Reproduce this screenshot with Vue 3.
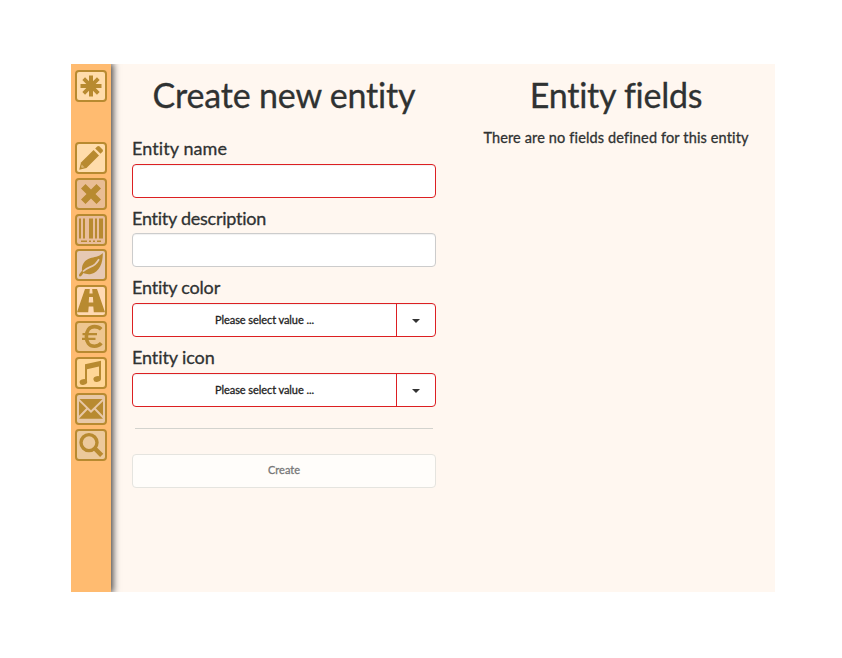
<script setup>
const tools = [
  { name: 'new', bg: '#ffdcab', first: true },
  { name: 'pencil', bg: '#ffdcab' },
  { name: 'remove', bg: '#e9bd94' },
  { name: 'barcode', bg: '#e9bd9a' },
  { name: 'leaf', bg: '#e6c9b4' },
  { name: 'road', bg: '#ffd9b3' },
  { name: 'euro', bg: '#eec690' },
  { name: 'music', bg: '#ffd697' },
  { name: 'mail', bg: '#e8c8a6' },
  { name: 'search', bg: '#ecc99b' },
]
</script>

<template>
  <div class="app">
    <nav class="sidebar">
      <button
        v-for="t in tools"
        :key="t.name"
        class="tool"
        :class="{ first: t.first }"
        :style="{ backgroundColor: t.bg }"
        :aria-label="t.name"
      >
        <svg viewBox="0 0 32 32" fill="#b88a30" stroke="none">
          <g v-if="t.name === 'new'" stroke="#b88a30" stroke-width="4">
            <path d="M16 5.5V26.5M5.5 16H26.5" />
            <path d="M8.7 8.7L23.3 23.3M23.3 8.7L8.7 23.3" stroke-width="3.8" />
          </g>
          <g v-else-if="t.name === 'pencil'">
            <path d="M4.2 27.8L6 20.4L18.6 8L24 13.4L11.5 25.9Z" />
            <path d="M20.2 6.4L22.2 4.5Q23.4 3.5 24.6 4.6L27.5 7.4Q28.6 8.6 27.5 9.8L25.5 11.7Z" />
            <path d="M6.7 22.5L9.6 25.2L7 26L6 25Z" fill="#d9b16b" />
          </g>
          <path
            v-else-if="t.name === 'remove'"
            d="M10.5 6L16 11.5L21.5 6L26 10.5L20.5 16L26 21.5L21.5 26L16 20.5L10.5 26L6 21.5L11.5 16L6 10.5Z"
          />
          <path
            v-else-if="t.name === 'barcode'"
            d="M4 4.5h2v20H4zM8 4.5h2v20H8zM14 4.5h4v20h-4zM20 4.5h2v20h-2zM24 4.5h4v20h-4zM6 26.5h6v1.5H6zM14 26.5h2v1.5h-2zM18 26.5h2v1.5h-2zM22 26.5h4v1.5h-4z"
          />
          <g v-else-if="t.name === 'leaf'">
            <path d="M27.8 4C28 13 25 23 16 25C13 25.6 10 24.7 8.5 24C7.5 25.2 6.7 27 5.2 27.5C3.7 27.3 3.8 25.6 4.6 24.7L7 21.7C6.4 16 9.5 11 15 9.3C20 7.7 24 8 27.8 4Z" />
            <path d="M8 22.5C12 18 16.5 18.5 20 15.3C22 13.5 23 12 24 10.3" fill="none" stroke="#e6c9b4" stroke-width="1.7" />
          </g>
          <path
            v-else-if="t.name === 'road'"
            fill-rule="evenodd"
            d="M10 4H14.8L14.4 8.5H17.6L17.2 4H22L30 27.3H18.8L18.3 21.5H13.7L13.2 27.3H2ZM14.1 12L13.7 17.5H18.3L17.9 12Z"
          />
          <g v-else-if="t.name === 'euro'" fill="none" stroke="#b88a30">
            <path d="M26.2 8.2C24 6 21.8 5.6 19.5 5.6C14 5.6 11.4 10 11.4 15.5C11.4 21 14 25.3 19.5 25.3C22.3 25.3 24.5 24.4 26.3 22.2" stroke-width="3.6" />
            <path d="M7.5 13.1H22M7 17.8H20.5" stroke-width="2.3" />
          </g>
          <g v-else-if="t.name === 'music'">
            <path d="M10 7.2L26 3.8V22H24V9.5L12 12.3V25H10Z" />
            <ellipse cx="8.4" cy="25" rx="3.8" ry="2.9" transform="rotate(-12 8.4 25)" />
            <ellipse cx="22.2" cy="22" rx="3.8" ry="2.9" transform="rotate(-12 22.2 22)" />
          </g>
          <path
            v-else-if="t.name === 'mail'"
            d="M4.5 6H27.5L16 17.2ZM4 8.2L11.2 15.2L4 22.8ZM28 8.2V22.8L20.8 15.2ZM12.6 16.7L16 20L19.4 16.7L28 25.8H4Z"
          />
          <g v-else fill="none" stroke="#b88a30">
            <circle cx="14" cy="13.6" r="8" stroke-width="3.4" />
            <path d="M19.3 19L26.7 26.3" stroke-width="4.5" />
          </g>
        </svg>
      </button>
    </nav>

    <main class="editor">
      <h1><span class="create-title">Create new entity</span></h1>
      <form>
        <label><span class="l-name">Entity name</span></label>
        <input class="control invalid" type="text" />
        <label><span class="l-desc">Entity description</span></label>
        <input class="control" type="text" />
        <label><span class="l-color">Entity color</span></label>
        <div class="control invalid select">
          <span class="value">Please select value ...</span>
          <span class="toggle"><i class="caret"></i></span>
        </div>
        <label><span class="l-icon">Entity icon</span></label>
        <div class="control invalid select">
          <span class="value">Please select value ...</span>
          <span class="toggle"><i class="caret"></i></span>
        </div>
        <hr />
        <button class="control submit" type="button" disabled>Create</button>
      </form>
    </main>

    <section class="fields">
      <h1><span class="fields-title">Entity fields</span></h1>
      <p>There are no fields defined for this entity</p>
    </section>
  </div>
</template>

<style>
body {
  background: #fff;
}
</style>

<style scoped>
* {
  box-sizing: border-box;
}
.app {
  display: flex;
  width: 704px;
  height: 528px;
  margin: 64px 0 0 71px;
  overflow: hidden;
  background: #fff7f0;
  color: #2f3232;
  font-family: Lato, "Liberation Sans", sans-serif;
  -webkit-text-stroke: 0.3px currentColor;
}
.sidebar {
  display: flex;
  flex: none;
  flex-direction: column;
  align-items: center;
  gap: 3.85px;
  width: 40px;
  padding-top: 6px;
  background: #ffbb70;
  box-shadow: 1px 0 7px 1px rgba(0, 0, 0, 0.75);
}
.tool {
  flex: none;
  width: 32px;
  height: 32px;
  padding: 0;
  border: 2px solid #b88a30;
  border-radius: 4px;
}
.tool.first {
  margin-bottom: 36px;
}
.tool svg {
  display: block;
  width: 32px;
  height: 32px;
  margin: -2px;
}
.editor {
  flex: none;
  width: 304px;
  margin-left: 21px;
}
h1 {
  height: 63px;
  margin: 0;
  padding-top: 10px;
  font-size: 34px;
  font-weight: 400;
  line-height: 42px;
  text-align: center;
  white-space: nowrap;
}
.create-title {
  letter-spacing: -0.18px;
}
.fields-title {
  letter-spacing: -0.25px;
}
form {
  padding-top: 9px;
}
label {
  display: block;
  height: 27.5px;
  font-size: 18px;
  line-height: 24px;
  white-space: nowrap;
}
.l-name {
  letter-spacing: 0.1px;
}
.l-desc {
  letter-spacing: -0.25px;
}
.l-color {
  letter-spacing: -0.2px;
}
.l-icon {
  letter-spacing: -0.1px;
}
.control {
  display: block;
  width: 304px;
  height: 34px;
  margin: 0 0 8.2px;
  padding: 0 12px;
  border: 1px solid #ccc;
  border-radius: 4px;
  background: #fff;
  box-shadow: inset 0 1px 1px rgba(0, 0, 0, 0.06);
}
.control.invalid {
  border-color: #dc1f22;
}
.select {
  display: flex;
  padding: 0;
  font-size: 11px;
}
.value {
  flex: 1;
  line-height: 31px;
  text-align: center;
  letter-spacing: -0.08px;
  color: #222;
}
.toggle {
  display: flex;
  align-items: center;
  justify-content: center;
  width: 39px;
  border-left: 1px solid #dc1f22;
}
.caret {
  margin-top: 2px;
  border: 4px solid transparent;
  border-top-color: #333;
  border-bottom: 0;
}
hr {
  height: 1px;
  margin: 21px 3px 25px;
  border: 0;
  background: #d3d3ce;
}
.submit {
  padding-bottom: 3px;
  border-color: #e5e4df;
  background: #fffdfa;
  box-shadow: none;
  color: #777;
  font: 11px Lato, sans-serif;
}
.fields {
  flex: 1;
  padding-left: 21px;
}
.fields p {
  margin: 0;
  font-size: 14.5px;
  letter-spacing: 0.14px;
  line-height: 21px;
  text-align: center;
  white-space: nowrap;
}
</style>
